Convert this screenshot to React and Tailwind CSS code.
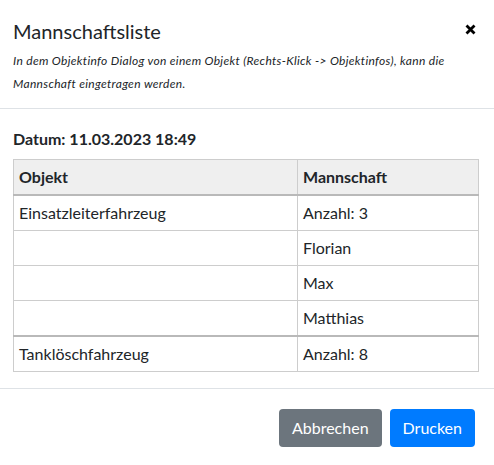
const crew = [
  {
    objekt: "Einsatzleiterfahrzeug",
    anzahl: 3,
    namen: ["Florian", "Max", "Matthias"],
  },
  {
    objekt: "Tanklöschfahrzeug",
    anzahl: 8,
    namen: [],
  },
];

const cell = "border border-[#cdcdcd] px-[5px] py-[5px] leading-6 text-left";

export default function App() {
  return (
    <div
      className="w-[494px] h-[465px] bg-white text-[#212529] text-[16px]"
      style={{ fontFamily: "Lato, sans-serif" }}
    >
      {/* Header */}
      <div className="flex items-start justify-between pl-[13px] pr-[18px] pt-4 pb-[13px] border-b border-[#dee2e6]">
        <div>
          <h5 className="text-[20px] leading-[30px] font-normal">Mannschaftsliste</h5>
          <p className="mt-[3px] text-[12px] leading-[23px] italic tracking-[0.32px]">
            In dem Objektinfo Dialog von einem Objekt (Rechts-Klick -&gt; Objektinfos), kann die
            <br />
            Mannschaft eingetragen werden.
          </p>
        </div>
        <button className="mt-[8px] p-0 text-black" aria-label="Schließen">
          <svg width="11" height="11" viewBox="0 0 11 11">
            <path d="M1.5 1.5 L9.5 9.5 M9.5 1.5 L1.5 9.5" stroke="currentColor" strokeWidth="2.8" strokeLinecap="butt" />
          </svg>
        </button>
      </div>

      {/* Body */}
      <div className="pl-[13px] pr-[15px] pt-[18px] pb-4">
        <p className="font-bold leading-6 mb-[8px]">Datum: 11.03.2023 18:49</p>
        <table className="w-full border-collapse">
          <thead>
            <tr className="bg-[#efefef]">
              <th className={`${cell} w-[284px] font-bold border-b-2 border-b-[#b9b9b9]`}>Objekt</th>
              <th className={`${cell} font-bold border-b-2 border-b-[#b9b9b9]`}>Mannschaft</th>
            </tr>
          </thead>
          {crew.map((g, gi) => (
            <tbody key={g.objekt} className={gi > 0 ? "border-t-2 border-t-[#b9b9b9]" : ""}>
              <tr>
                <td className={cell}>{g.objekt}</td>
                <td className={cell}>Anzahl: {g.anzahl}</td>
              </tr>
              {g.namen.map((n) => (
                <tr key={n}>
                  <td className={cell}></td>
                  <td className={cell}>{n}</td>
                </tr>
              ))}
            </tbody>
          ))}
        </table>
      </div>

      {/* Footer */}
      <div className="flex justify-end gap-2 border-t border-[#dee2e6] pt-5 pr-[19px]">
        <button className="bg-[#6c757d] text-white rounded px-[13px] py-[7px] leading-6">Abbrechen</button>
        <button className="bg-[#007bff] text-white rounded px-[13px] py-[7px] leading-6">Drucken</button>
      </div>
    </div>
  );
}
